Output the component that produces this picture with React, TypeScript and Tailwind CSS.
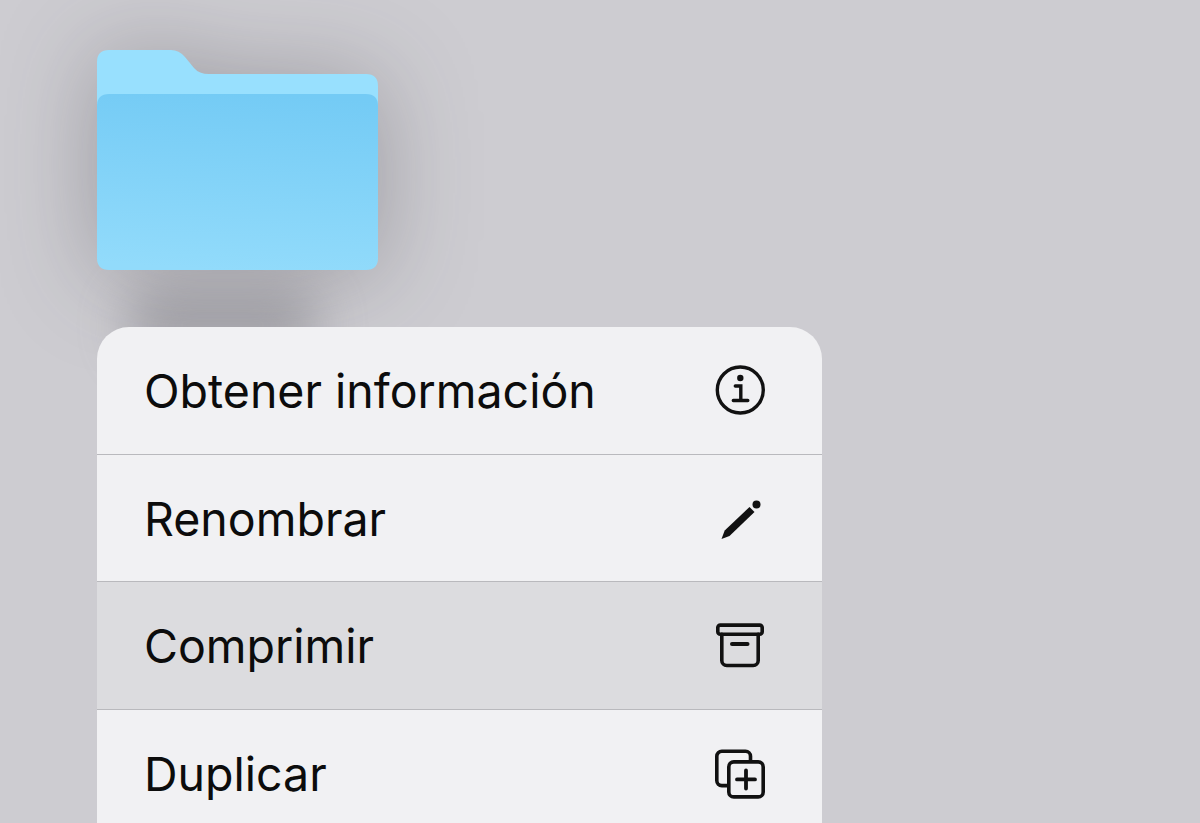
const rows = [
  { label: "Obtener información", icon: <InfoIcon />, active: false },
  { label: "Renombrar", icon: <PencilIcon />, active: false },
  { label: "Comprimir", icon: <ArchiveIcon />, active: true },
  { label: "Duplicar", icon: <DuplicateIcon />, active: false },
];

function InfoIcon() {
  return (
    <svg width="52" height="52" viewBox="0 0 52 52" fill="none" stroke="#111" strokeWidth="3.4" strokeLinecap="round">
      <circle cx="26.300" cy="26" r="23" />
      <circle cx="26.300" cy="14" r="3.200" fill="#111" stroke="none" />
      <path d="M21.300 22h5.500v14.500M19.300 36.500h14.500" />
    </svg>
  );
}

function PencilIcon() {
  return (
    <svg width="52" height="52" viewBox="0 0 52 52" fill="none">
      <path d="M7.500 47l3.200-8.500L35.500 15l5 5L15.500 44z" fill="#111" />
      <circle cx="42.500" cy="12.500" r="4" fill="#111" />
    </svg>
  );
}

function ArchiveIcon() {
  return (
    <svg width="52" height="52" viewBox="0 0 52 52" fill="none" stroke="#111" strokeWidth="3.600" strokeLinecap="round" strokeLinejoin="round">
      <rect x="3.800" y="6.100" width="44.400" height="9.100" rx="2.500" />
      <path d="M7.800 15.200V41.500a5 5 0 0 0 5 5h26.400a5 5 0 0 0 5-5V15.200" />
      <path d="M18 25h15.500" strokeWidth="4" />
    </svg>
  );
}

function DuplicateIcon() {
  return (
    <svg width="52" height="52" viewBox="0 0 52 52" fill="none" stroke="#111" strokeWidth="3.600" strokeLinecap="round" strokeLinejoin="round">
      <path d="M13 38.600H7.800a5 5 0 0 1-5-5V9.200a5 5 0 0 1 5-5h23.700a5 5 0 0 1 5 5v5" />
      <rect x="14.800" y="14.900" width="34.400" height="35" rx="5" />
      <path d="M32 23.500v18M23 32.400h18" strokeWidth="3.800" />
    </svg>
  );
}

function Folder() {
  return (
    <svg
      width="281"
      height="220"
      viewBox="0 0 281 220"
      className="relative block overflow-visible [filter:drop-shadow(0_4px_48px_rgba(40,40,50,0.3))]"
    >
      <defs>
        <linearGradient id="front" x1="0.55" y1="0" x2="0.45" y2="1">
          <stop offset="0" stopColor="#74cbf5" />
          <stop offset="1" stopColor="#92dbfb" />
        </linearGradient>
      </defs>
      <path
        d="M0 12Q0 0 12 0H74Q82 0 88 7L97 18Q102 24 112 24H269Q281 24 281 36V120H0Z"
        fill="#98e0fe"
      />
      <path
        d="M0 56Q0 44 12 44H269Q281 44 281 56V208Q281 220 269 220H12Q0 220 0 208Z"
        fill="url(#front)"
      />
    </svg>
  );
}

export default function App() {
  return (
    <div className="relative h-[823px] w-[1200px] overflow-hidden bg-[#cdccd1] pl-[97px] pt-[50px] font-['Inter','Liberation_Sans',sans-serif]">
      <div className="absolute left-[125px] top-[290px] h-[70px] w-[195px] rounded-full bg-[#8e8d93] opacity-60 blur-[24px]" />
      <div className="h-[220px] w-[281px]">
        <Folder />
      </div>
      <div className="relative mt-[57px] w-[725px] rounded-t-[32px] bg-[#f1f1f3]">
        {rows.map((r) => (
          <div
            key={r.label}
            className={`flex h-[127.6px] items-center justify-between border-b border-[#b9b9bd] pl-[47px] pr-[56px] ${
              r.active ? "bg-[#dcdcdf]" : ""
            }`}
          >
            <span className="pt-[2px] text-[46.5px] leading-none text-[#0c0c0c]">{r.label}</span>
            {r.icon}
          </div>
        ))}
      </div>
    </div>
  );
}
